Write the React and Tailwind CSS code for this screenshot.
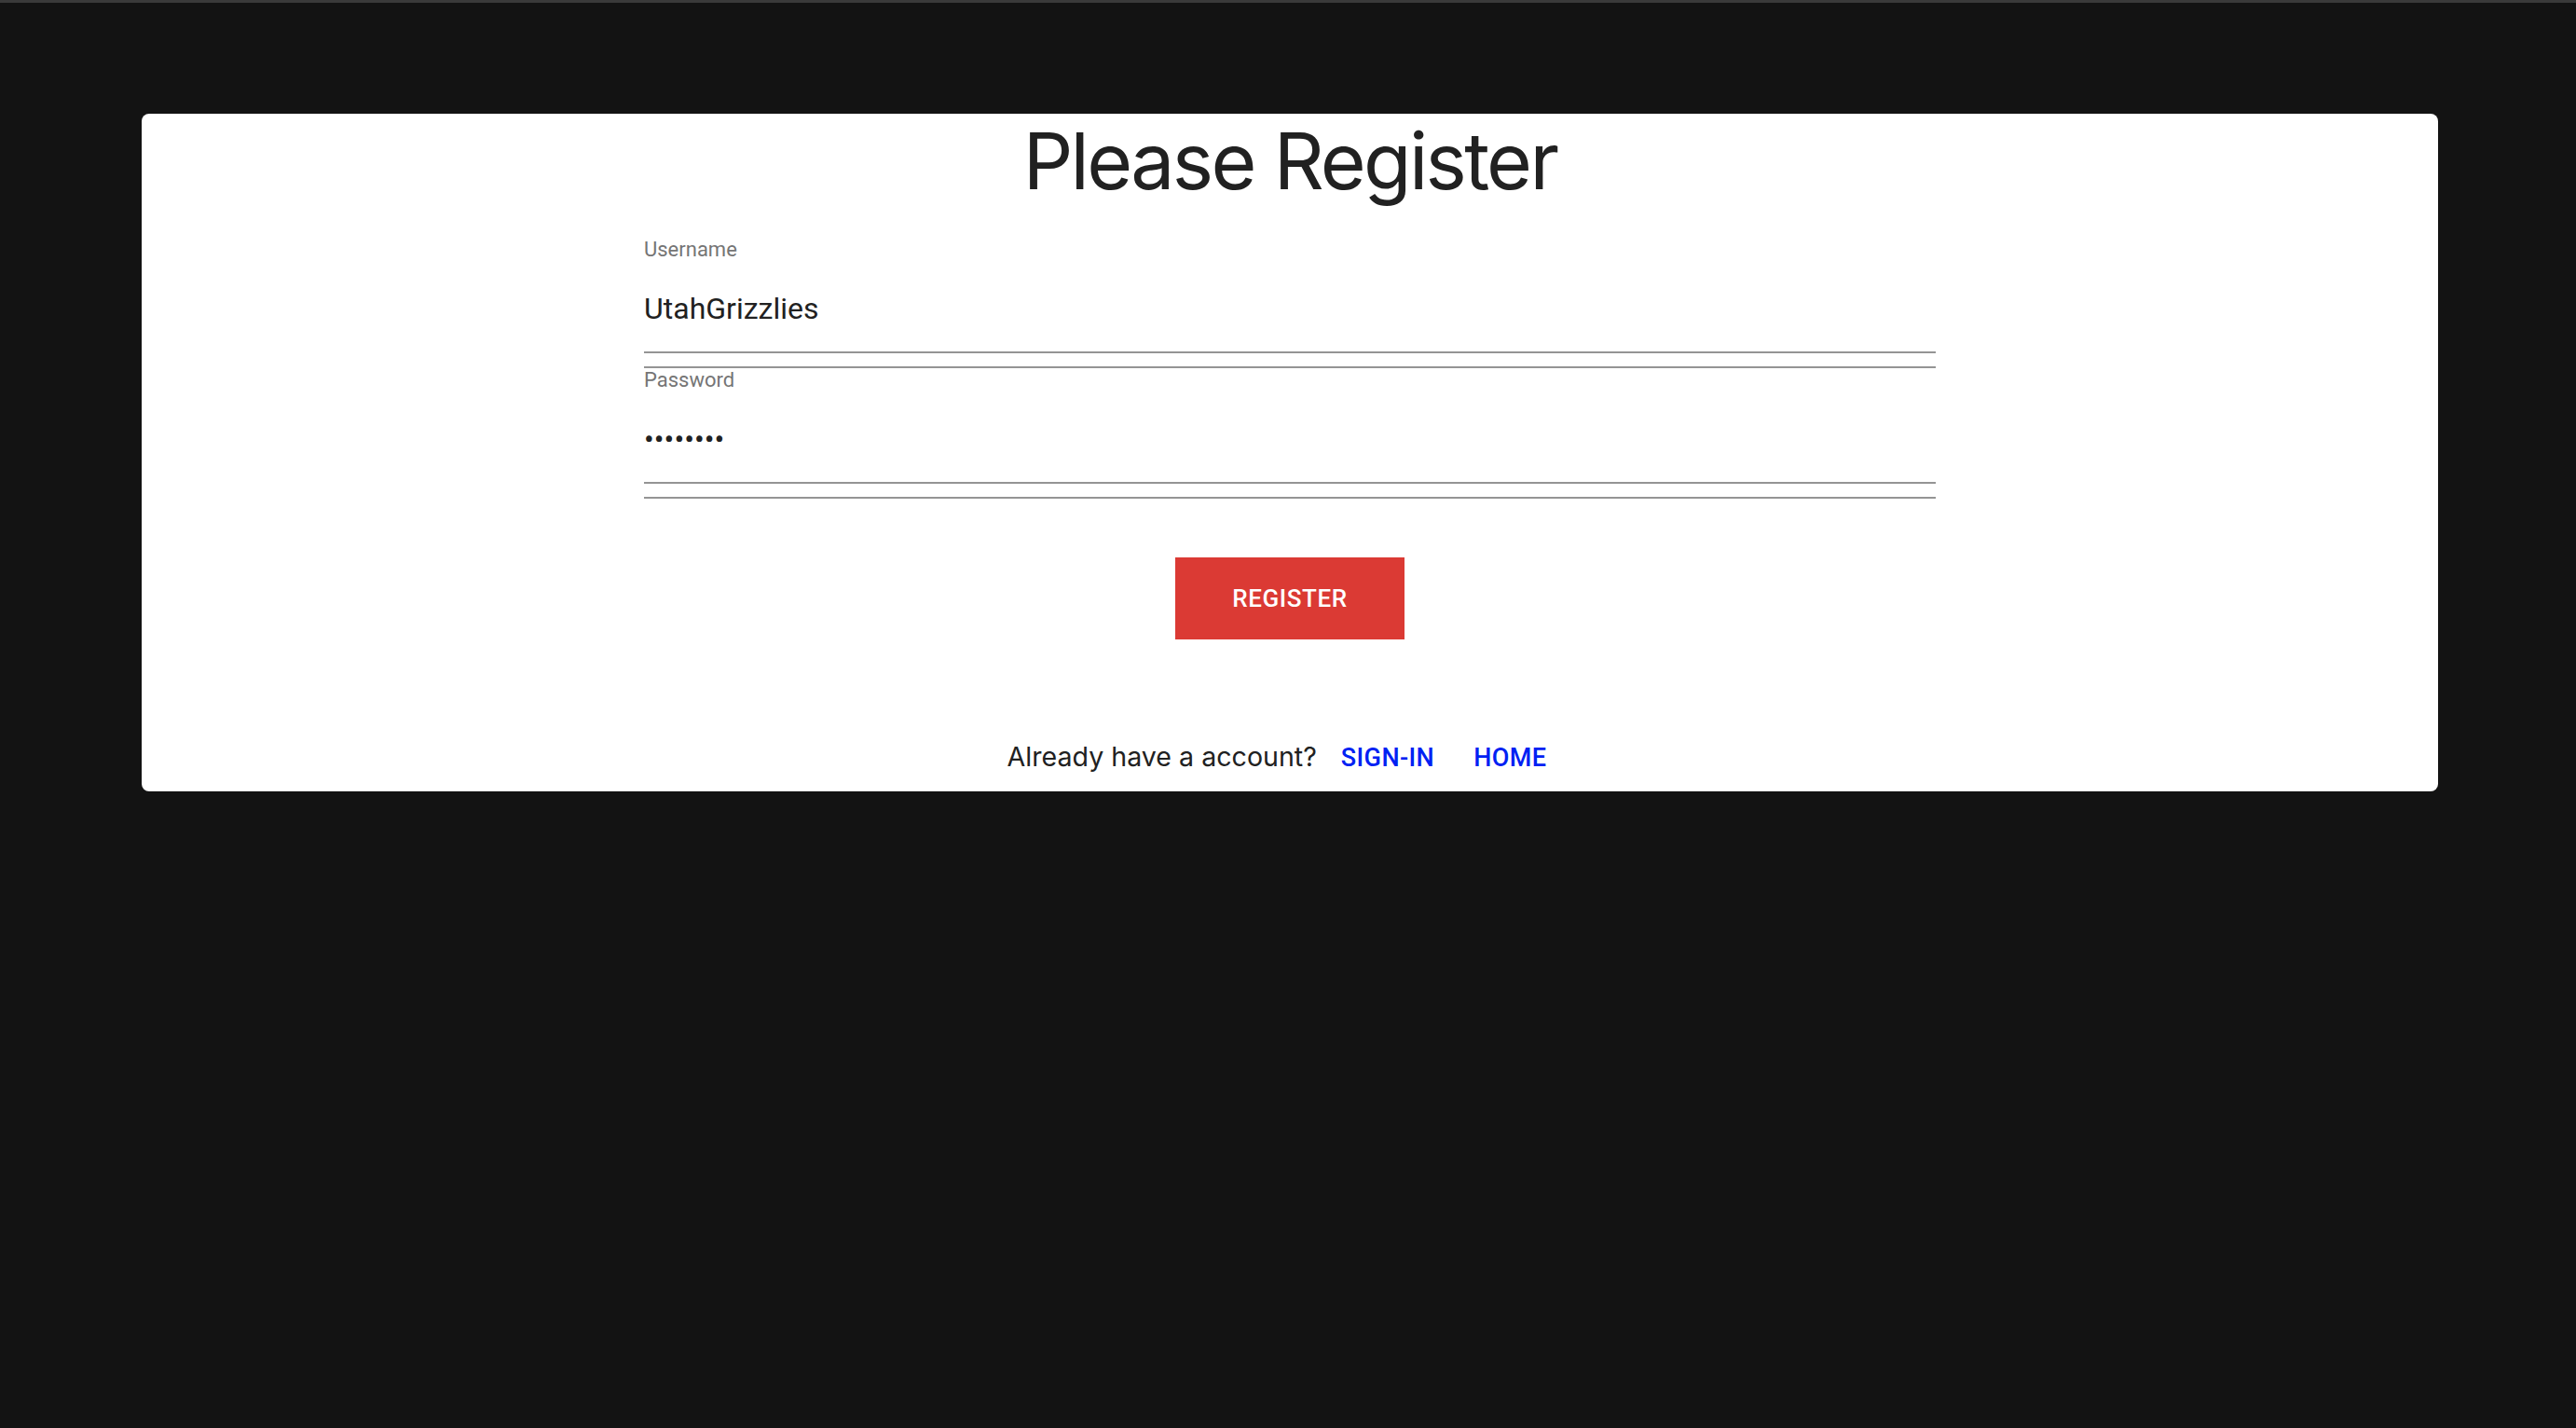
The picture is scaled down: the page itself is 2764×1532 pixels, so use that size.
import React from 'react';

const inter = "font-['Inter','Liberation_Sans',sans-serif]";
const roboto = "font-['Roboto','Liberation_Sans',sans-serif]";

// --- form field with the doubled underline ---
const Field = ({ label, type = 'text', value }) => {
  return (
    <div className="flex flex-col h-[140px]">
      <label className={`${roboto} text-[22px] leading-[21px] text-[#757575]`}>{label}</label>
      <input
        type={type}
        defaultValue={value}
        readOnly
        className={`${roboto} mt-[34px] h-[38px] p-0 text-[32px] leading-[38px] text-[#212121] bg-transparent outline-none border-0`}
      />
      <div className="mt-[27px] h-[2px] bg-[#949494]" />
      <div className="mt-[14px] h-[2px] bg-[#949494]" />
    </div>
  );
};

const LinkButton = ({ children, className }) => (
  <button className={`${roboto} px-[16px] text-[27px] font-medium tracking-[0.4px] text-[#0021f3] uppercase ${className || ''}`}>
    {children}
  </button>
);

export default function App() {
  return (
    <div className="min-h-screen bg-[#131313] border-t-[3px] border-[#3a3a3a]">
      <div className="ml-[152px] mr-[148px] mt-[119px] bg-white rounded-[8px] flex flex-col items-center pb-[19px]">
        <h1 className={`${inter} text-[84px] leading-[102px] font-normal text-[#212121] tracking-[-2.7px]`}>
          Please Register
        </h1>

        <form className="w-[1386px] mt-[33px] flex flex-col" onSubmit={(e) => e.preventDefault()}>
          <Field label="Username" value="UtahGrizzlies" />
          <Field label="Password" type="password" value="password" />
        </form>

        <button
          className={`${roboto} mt-[61px] w-[246px] h-[88px] bg-[#db3a34] text-white text-[26px] font-medium tracking-[0.6px] uppercase`}
        >
          Register
        </button>

        <div className="mt-[109px] mr-[12px] flex items-baseline leading-[34px]">
          <span className={`${inter} text-[28.6px] text-[#212121]`}>Already have a account?</span>
          <LinkButton className="ml-[10px]">Sign-in</LinkButton>
          <LinkButton className="ml-[10px]">Home</LinkButton>
        </div>
      </div>
    </div>
  );
}
